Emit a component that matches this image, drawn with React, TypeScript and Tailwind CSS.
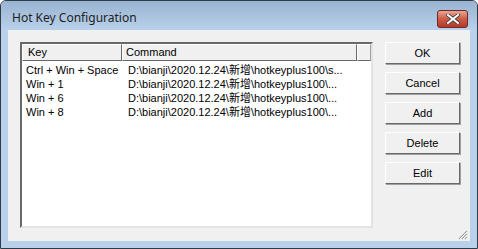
import React from "react";

const rows = [
  { key: "Ctrl + Win + Space", cmd: "D:\\bianji\\2020.12.24\\新增\\hotkeyplus100\\s..." },
  { key: "Win + 1", cmd: "D:\\bianji\\2020.12.24\\新增\\hotkeyplus100\\..." },
  { key: "Win + 6", cmd: "D:\\bianji\\2020.12.24\\新增\\hotkeyplus100\\..." },
  { key: "Win + 8", cmd: "D:\\bianji\\2020.12.24\\新增\\hotkeyplus100\\..." },
];

const buttons = ["OK", "Cancel", "Add", "Delete", "Edit"];

function Btn({ label }: { label: string }) {
  return (
    <div className="h-[22px] w-[75px] bg-[#f0f0f0] border border-t-white border-l-white border-r-[#696969] border-b-[#696969] shadow-[1px_1px_0_#a0a0a0] flex items-center justify-center text-[11px] text-black">
      {label}
    </div>
  );
}

export default function App() {
  return (
    <div
      className="w-[478px] h-[249px] bg-white"
      style={{ fontFamily: '"Liberation Sans", "Noto Sans CJK SC", sans-serif' }}
    >
      <div className="w-full h-full rounded-t-[6px] border border-[#2e3a46] bg-[#b9d1ea] flex flex-col overflow-hidden">
        {/* Title bar */}
        <div className="h-[29px] shrink-0 bg-gradient-to-b from-[#99b4d1] to-[#b9d1ea] flex items-start justify-between pl-[11px] pr-[9px]">
          <span
            className="mt-[8px] text-[12px] text-[#1e1e1e]"
            style={{ fontFamily: '"Noto Sans", "Open Sans", sans-serif' }}
          >
            Hot Key Configuration
          </span>
          <div className="mt-[9px] w-[31px] h-[18px] rounded-[3px] border border-[#6b2a24] bg-gradient-to-b from-[#e8a596] via-[#cf5b45] to-[#b3382a] flex items-center justify-center">
            <svg width="14" height="10" viewBox="0 0 14 10">
              <path d="M2 1 L12 9 M12 1 L2 9" stroke="#3a3a3a" strokeWidth="3.6" strokeLinecap="square" />
              <path d="M2 1 L12 9 M12 1 L2 9" stroke="#ffffff" strokeWidth="2" strokeLinecap="square" />
            </svg>
          </div>
        </div>

        {/* Client area */}
        <div className="flex-1 mx-[7px] mb-[7px] bg-[#f0f0f0] flex pl-[12px] pt-[12px] pr-[10px] pb-[12px] gap-[12px] relative">
          {/* List view */}
          <div className="w-[353px] h-[186px] bg-white border-2 border-t-[#696969] border-l-[#696969] border-r-[#e3e3e3] border-b-[#e3e3e3] flex flex-col">
            <div className="h-[17px] flex text-[11px] text-black">
              <div className="w-[100px] pl-[5px] flex items-center bg-[#f0f0f0] border border-t-white border-l-white border-r-[#696969] border-b-[#696969]">
                Key
              </div>
              <div className="w-[235px] pl-[3px] flex items-center bg-[#f0f0f0] border border-t-white border-l-white border-r-[#696969] border-b-[#696969]">
                Command
              </div>
              <div className="flex-1 bg-[#f0f0f0] border border-t-white border-l-white border-r-[#a0a0a0] border-b-[#696969]" />
            </div>
            <div className="pt-[2px] flex flex-col">
              {rows.map((r) => (
                <div key={r.key} className="h-[14px] flex items-center text-[11px] text-black leading-[14px]">
                  <span className="w-[106px] pl-[4px] whitespace-nowrap">{r.key}</span>
                  <span className="whitespace-nowrap">{r.cmd}</span>
                </div>
              ))}
            </div>
          </div>

          {/* Buttons */}
          <div className="flex flex-col gap-[8px]">
            {buttons.map((b) => (
              <Btn key={b} label={b} />
            ))}
          </div>

          {/* Size grip */}
          <svg className="absolute right-[2px] bottom-[1px]" width="11" height="11" viewBox="0 0 11 11">
            <path d="M10 2 L2 10 M10 5 L5 10 M10 8 L8 10" stroke="#a0a0a0" strokeWidth="1.2" />
            <path d="M10 3 L3 10 M10 6 L6 10 M10 9 L9 10" stroke="#ffffff" strokeWidth="1" />
          </svg>
        </div>
      </div>
    </div>
  );
}
